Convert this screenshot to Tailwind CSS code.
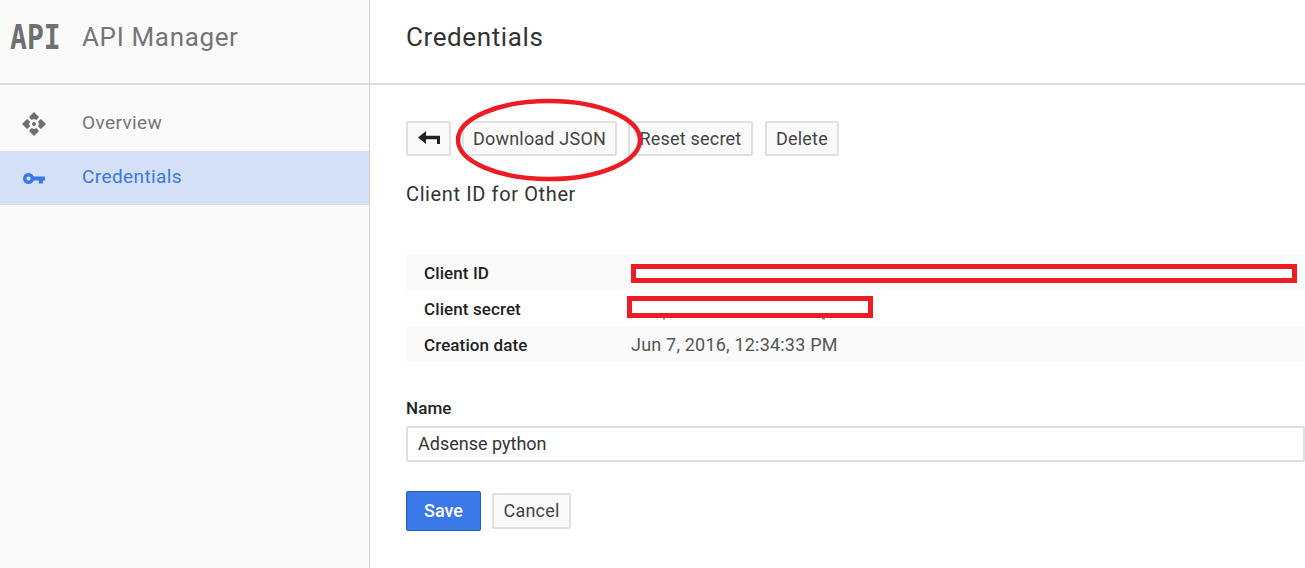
<!DOCTYPE html>
<html lang="en">
<head>
  <meta charset="UTF-8" />
  <title>API Manager - Credentials</title>
  <script src="https://cdn.jsdelivr.net/npm/@tailwindcss/browser@4"></script>
</head>
<body class="h-[568px] w-[1305px] overflow-hidden bg-white font-['Roboto',sans-serif] text-[#333]">
  <div class="relative flex h-[568px]">
    <!-- sidebar -->
    <aside class="w-[370px] shrink-0 border-r border-[#d0d0d0] bg-[#fafafa]">
      <div class="flex h-[85px] items-center border-b-2 border-[#dcdcdc] pb-[8px]">
        <div class="w-[82px] pl-[10px]">
          <span class="block origin-left scale-x-[0.85] font-['DejaVu_Sans_Mono',monospace] text-[33px] leading-none font-bold text-[#6f6f6f]">API</span>
        </div>
        <span class="text-[26px] tracking-[0.65px] text-[#757575]">API Manager</span>
      </div>
      <nav class="pt-[12px]">
        <a class="flex h-[54px] items-center text-[19px] tracking-[0.4px] text-[#757575]">
          <span class="flex w-[82px] pl-[22px]">
            <svg width="24" height="24" viewBox="0 0 24 24" fill="#6f6f6f">
              <path d="M12 0 L17 5 L14.5 8 L12 7 L9.5 8 L7 5 Z" />
              <path d="M12 24 L17 19 L14.5 16 L12 17 L9.5 16 L7 19 Z" />
              <path d="M0 12 L5 7 L8 9.5 L7 12 L8 14.5 L5 17 Z" />
              <path d="M24 12 L19 7 L16 9.5 L17 12 L16 14.5 L19 17 Z" />
              <circle cx="12" cy="12" r="2" />
            </svg>
          </span>
          <span class="pb-[1px]">Overview</span>
        </a>
        <a class="flex h-[54px] items-center bg-[#d3e0f6] text-[19px] tracking-[0.4px] text-[#3b78e7]">
          <span class="flex w-[82px] pl-[23px]">
            <svg width="22" height="11" viewBox="0 0 22 11" fill="none">
              <circle cx="5.5" cy="5.5" r="3.8" stroke="#3b78e7" stroke-width="3.4" />
              <path d="M9 3.6 H22 V7.6 H20 V10.5 H15.8 V7.6 H9 Z" fill="#3b78e7" />
            </svg>
          </span>
          <span class="pb-[1px]">Credentials</span>
        </a>
      </nav>
    </aside>

    <!-- main -->
    <main class="min-w-0 flex-1">
      <div class="flex h-[85px] items-center border-b-2 border-[#dcdcdc] pb-[8px] pl-[36px]">
        <h1 class="text-[26px] tracking-[0.6px] text-[#333]">Credentials</h1>
      </div>

      <div class="pl-[36px]">
        <div class="mt-[36px] flex h-[35px] text-[18px] tracking-[0.2px] text-[#444]">
          <button class="flex w-[45px] items-center justify-center rounded-[2px] border-2 border-[#e0e0e0] bg-[#fafafa]">
            <svg width="22" height="15" viewBox="0 0 22 15" fill="#222">
              <path d="M0 6.5 L8 0 V4.7 H22 V8.3 H8 V13 Z" />
              <rect x="19" y="5" width="3" height="8" />
            </svg>
          </button>
          <button class="ml-[11px] w-[155px] rounded-[2px] border-2 border-[#e0e0e0] bg-[#fafafa]">Download JSON</button>
          <button class="ml-[11px] w-[125px] rounded-[2px] border-2 border-[#e0e0e0] bg-[#fafafa]">Reset secret</button>
          <button class="ml-[12px] w-[74px] rounded-[2px] border-2 border-[#e0e0e0] bg-[#fafafa]">Delete</button>
        </div>

        <h2 class="mt-[24px] text-[20px] leading-[28px] tracking-[0.62px] text-[#333]">Client ID for Other</h2>

        <dl class="mt-[46px] text-[17px] tracking-[0.1px]">
          <div class="flex h-[37px] items-center bg-[#fafafa]">
            <dt class="w-[225px] pt-[2px] pl-[18px] font-medium text-[#222]">Client ID</dt>
            <dd class="text-[#555]"></dd>
          </div>
          <div class="flex h-[35px] items-center">
            <dt class="w-[225px] pt-[2px] pl-[18px] font-medium text-[#222]">Client secret</dt>
            <dd class="text-[#555]"></dd>
          </div>
          <div class="flex h-[36px] items-center bg-[#fafafa]">
            <dt class="w-[225px] pt-[4px] pl-[18px] font-medium text-[#222]">Creation date</dt>
            <dd class="text-[18px] tracking-[0.2px] text-[#555]">Jun 7, 2016, 12:34:33 PM</dd>
          </div>
        </dl>

        <label class="mt-[35px] block text-[17px] leading-[22px] font-medium tracking-[0.1px] text-[#222]">Name</label>
        <input value="Adsense python" class="mt-[7px] block h-[36px] w-full rounded-[2px] border-2 border-[#e0e0e0] bg-white pb-[2px] pl-[10px] text-[18px] text-[#333]" />

        <div class="mt-[29px] flex items-center">
          <button class="h-[40px] w-[75px] rounded-[2px] border border-[#1c5fc9] bg-[#3b78e7] pb-[2px] text-[18px] font-medium text-white">Save</button>
          <button class="ml-[11px] h-[36px] w-[79px] rounded-[2px] border-2 border-[#e0e0e0] bg-[#fafafa] pb-[2px] text-[18px] tracking-[0.2px] text-[#444]">Cancel</button>
        </div>
      </div>
    </main>

    <!-- red markup drawn over the screenshot -->
    <svg class="pointer-events-none absolute top-0 left-0" width="1305" height="568" viewBox="0 0 1305 568" fill="none">
      <ellipse cx="549" cy="140" rx="91" ry="39" stroke="#ed1c24" stroke-width="4.5" />
      <path d="M663 318 h2 v1.5 h-2 Z M822 318 h3 v1.5 h-3 Z" fill="#888" />
      <rect x="633.5" y="266.5" width="661" height="14" fill="#fff" stroke="#ed1c24" stroke-width="5" />
      <rect x="629.5" y="298.5" width="241" height="17" fill="#fff" stroke="#ed1c24" stroke-width="5" />
    </svg>
  </div>
</body>
</html>
